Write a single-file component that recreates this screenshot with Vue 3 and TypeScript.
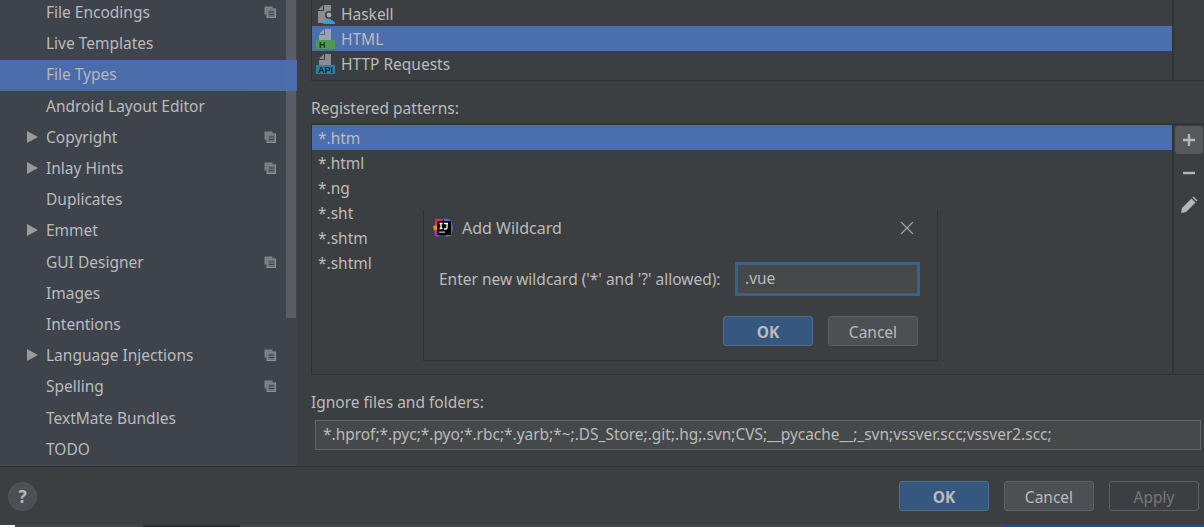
<script setup lang="ts">
interface NavItem { label: string; arrow?: boolean; copy?: boolean; active?: boolean }
const nav: NavItem[] = [
  { label: 'File Encodings', copy: true },
  { label: 'Live Templates' },
  { label: 'File Types', active: true },
  { label: 'Android Layout Editor' },
  { label: 'Copyright', arrow: true, copy: true },
  { label: 'Inlay Hints', arrow: true, copy: true },
  { label: 'Duplicates' },
  { label: 'Emmet', arrow: true },
  { label: 'GUI Designer', copy: true },
  { label: 'Images' },
  { label: 'Intentions' },
  { label: 'Language Injections', arrow: true, copy: true },
  { label: 'Spelling', copy: true },
  { label: 'TextMate Bundles' },
  { label: 'TODO' },
]
const patterns = ['*.htm', '*.html', '*.ng', '*.sht', '*.shtm', '*.shtml']
</script>

<template>
  <div class="window">
    <div class="main">
      <aside class="sidebar">
        <div class="nav">
          <div v-for="item in nav" :key="item.label" class="nav-row" :class="{ active: item.active }">
            <span class="arrow-slot"><i v-if="item.arrow" class="arrow"></i></span>
            <span class="nav-label">{{ item.label }}</span>
            <svg v-if="item.copy" class="copy" width="12" height="12" viewBox="0 0 12 12">
              <path d="M.5.5h8v2h-6v6h-2z" fill="#7f8388" />
              <rect x="3" y="3" width="8.5" height="8.5" fill="#6e7276" stroke="#8d9195" />
              <path d="M5 6h5M5 8.5h5" stroke="#3e434c" />
            </svg>
          </div>
        </div>
        <div class="side-scroll"><div class="side-thumb"></div></div>
      </aside>

      <section class="content">
        <div class="types-box">
          <div class="types-list">
            <div class="type-row">
              <svg class="ficon" width="20" height="25" viewBox="0 0 20 25">
                <path d="M2 9l5-5v5zM8 4h7v18H2V10h6z" fill="#8a8d90" />
                <circle cx="13" cy="14" r="4" fill="#3c3f41" />
                <circle cx="13" cy="14" r="2.400" fill="#a8abad" />
                <path d="M7 23c0-3 2-4 6-4s6 1 6 4z" fill="#29a3dc" />
              </svg>
              <span>Haskell</span>
            </div>
            <div class="type-row selected">
              <svg class="ficon" width="20" height="25" viewBox="0 0 20 25">
                <path d="M3 8l5-5v5zM9 3h6v11H3V9h6z" fill="#9aa3b4" />
                <rect y="14" width="19" height="9" fill="#4e9a52" />
                <text x="3" y="22" class="badge-text" fill="#16361a">H</text>
              </svg>
              <span>HTML</span>
            </div>
            <div class="type-row">
              <svg class="ficon" width="20" height="25" viewBox="0 0 20 25">
                <path d="M3 8l5-5v5zM9 3h6v11H3V9h6z" fill="#8a8d90" />
                <rect y="14" width="19" height="9" fill="#2d7fa8" />
                <text x="2" y="22" class="badge-text" fill="#10222c">API</text>
              </svg>
              <span>HTTP Requests</span>
            </div>
          </div>
          <div class="box-gutter"></div>
        </div>

        <div class="section-label patterns-label">Registered patterns:</div>

        <div class="patterns-box">
          <div class="patterns-list">
            <div v-for="(p, i) in patterns" :key="p" class="pattern-row" :class="{ selected: i === 0 }">{{ p }}</div>
          </div>
          <div class="tools">
            <button class="tool hot">
              <svg width="16" height="16" viewBox="0 0 16 16"><path d="M8 2v12M2 8h12" stroke="#b4b6b8" stroke-width="2.400" /></svg>
            </button>
            <button class="tool">
              <svg width="16" height="16" viewBox="0 0 16 16"><path d="M2 8h12" stroke="#b4b6b8" stroke-width="2.400" /></svg>
            </button>
            <button class="tool">
              <svg width="18" height="18" viewBox="0 0 18 18"><path d="M1 17l1-5L11.500 2.500l4 4L6 16zM12.500 1.500l1-1 4 4-1 1z" fill="#b4b6b8" /></svg>
            </button>
          </div>
        </div>

        <div class="section-label ignore-label">Ignore files and folders:</div>
        <div class="ignore-input">*.hprof;*.pyc;*.pyo;*.rbc;*.yarb;*~;.DS_Store;.git;.hg;.svn;CVS;__pycache__;_svn;vssver.scc;vssver2.scc;</div>

        <div class="dialog">
          <div class="dialog-title">
            <svg class="logo" width="21" height="20" viewBox="0 0 21 20">
              <path d="M2 1h8l-2 8-6 3z" fill="#f0245e" />
              <path d="M11 0l7 2 2 8-2 8-5 1z" fill="#3f6fe8" />
              <path d="M1 12l5-1v8l-4-1z" fill="#a832b8" />
              <path d="M0 8l4-1v5H1z" fill="#f58a1f" />
              <rect x="4" y="3" width="14" height="14" fill="#000" />
              <path d="M6.500 5.500h3M8 5.500v5M6.500 10.500h3M11 5.500h4M14 5.500v4.500q0 1-1.500 1H11" stroke="#fff" fill="none" stroke-width="1.300" />
              <rect x="6" y="13.500" width="6" height="1.300" fill="#bbb" />
            </svg>
            <span class="title-text">Add Wildcard</span>
            <svg class="close" width="14" height="14" viewBox="0 0 14 14"><path d="M1 1l12 12M13 1 1 13" stroke="#a4a6a8" stroke-width="1.100" /></svg>
          </div>
          <div class="dialog-field">
            <label class="field-label">Enter new wildcard ('*' and '?' allowed):</label>
            <div class="field-input">.vue</div>
          </div>
          <div class="dialog-actions">
            <button class="btn primary">OK</button>
            <button class="btn">Cancel</button>
          </div>
        </div>
      </section>
    </div>

    <footer class="footer">
      <div class="help">?</div>
      <div class="footer-actions">
        <button class="btn primary">OK</button>
        <button class="btn">Cancel</button>
        <button class="btn disabled">Apply</button>
      </div>
    </footer>

    <div class="strip">
      <span class="strip-white"></span>
      <span class="strip-dark"></span>
      <span class="strip-blue"></span>
    </div>
  </div>
</template>

<style scoped>
.window {
  width: 1204px;
  height: 527px;
  background: #3c3f41;
  color: #bbbbbb;
  font-family: "Noto Sans", "Open Sans", sans-serif;
  font-size: 15.500px;
  display: flex;
  flex-direction: column;
  overflow: hidden;
}
.main {
  height: 466px;
  display: flex;
  flex: none;
}
.sidebar {
  width: 297px;
  flex: none;
  background: #3e434c;
  position: relative;
  overflow: hidden;
}
.nav {
  margin-top: -2.500px;
}
.nav-row {
  height: 31.200px;
  box-sizing: border-box;
  display: flex;
  align-items: center;
  padding: 0 21px 2px 27px;
}
.nav-row.active {
  background: #4b6eaf;
  position: relative;
  z-index: 1;
  opacity: 0.97;
}
.arrow-slot {
  width: 19px;
  flex: none;
  display: flex;
}
.arrow {
  width: 0;
  height: 0;
  border-left: 11px solid #9a9a9a;
  border-top: 6px solid transparent;
  border-bottom: 6px solid transparent;
}
.nav-label {
  flex: 1;
}
.copy {
  flex: none;
}
.side-scroll {
  position: absolute;
  top: 0;
  right: 1px;
  bottom: 0;
  width: 10px;
}
.side-thumb {
  height: 318px;
  background: rgba(255, 255, 255, 0.14);
}
.content {
  flex: 1;
  padding-left: 14px;
  position: relative;
}
.types-box {
  height: 80px;
  display: flex;
  border-left: 1px solid #2f3133;
  border-bottom: 1px solid #2f3133;
}
.types-list {
  width: 860px;
  padding-top: 1px;
  flex: none;
}
.box-gutter {
  flex: 1;
  border-left: 2px solid #323436;
}
.type-row {
  height: 25px;
  display: flex;
  align-items: center;
  gap: 5px;
  padding-left: 4px;
}
.type-row.selected,
.pattern-row.selected {
  background: #4b6eaf;
}
.ficon {
  flex: none;
}
.badge-text {
  font-family: "Liberation Sans", sans-serif;
  font-size: 9px;
  font-weight: 700;
}
.section-label {
  line-height: 20px;
}
.patterns-label {
  margin-top: 17px;
}
.patterns-box {
  margin-top: 5px;
  height: 249px;
  display: flex;
  border-top: 2px solid #323436;
  border-bottom: 1px solid #2f3133;
  border-left: 1px solid #2f3133;
}
.patterns-list {
  width: 860px;
  flex: none;
}
.pattern-row {
  height: 25px;
  line-height: 27px;
  padding-left: 6px;
}
.tools {
  flex: 1;
  border-left: 2px solid #323436;
  padding: 1px 0 0 1px;
  display: flex;
  flex-direction: column;
  gap: 4.500px;
}
.tool {
  width: 28px;
  height: 28px;
  margin: 0;
  padding: 0;
  border: none;
  background: none;
  border-radius: 4px;
  display: flex;
  align-items: center;
  justify-content: center;
}
.tool.hot {
  background: #55595a;
}
.ignore-label {
  margin-top: 17px;
}
.ignore-input {
  margin: 8px 3px 0 4px;
  height: 30px;
  line-height: 27px;
  padding-left: 7px;
  font-size: 15.440px;
  background: #45494a;
  border: 1px solid #646464;
  box-sizing: border-box;
}
.dialog {
  position: absolute;
  left: 126px;
  top: 210px;
  width: 515px;
  height: 151px;
  box-sizing: border-box;
  background: #3c3f41;
  border: 1px solid #2f3133;
  border-top: none;
  display: flex;
  flex-direction: column;
}
.dialog-title {
  height: 36px;
  display: flex;
  align-items: center;
  padding: 0 23px 0 9px;
}
.logo {
  flex: none;
}
.title-text {
  margin-left: 8px;
  flex: 1;
  font-size: 16px;
}
.dialog-field {
  display: flex;
  align-items: center;
  margin-top: 16px;
  padding-left: 15px;
}
.field-label {
  width: 296px;
  flex: none;
}
.field-input {
  width: 185px;
  height: 34px;
  line-height: 27px;
  box-sizing: border-box;
  border: 3px solid #3d6185;
  padding-left: 7px;
  background: #45494a;
}
.dialog-actions {
  display: flex;
  gap: 15px;
  margin-top: 20px;
  padding-left: 299px;
}
.btn {
  width: 90px;
  height: 30px;
  padding: 1px 0 0;
  margin: 0;
  box-sizing: border-box;
  font: inherit;
  color: #bbbbbb;
  background: #4c5052;
  border: 1px solid #5e6060;
  border-radius: 3px;
}
.btn.primary {
  background: #365880;
  border-color: #4c708c;
  font-weight: 700;
}
.btn.disabled {
  background: transparent;
  border-color: #5e6060;
  color: #777777;
}
.footer {
  flex: 1;
  border-top: 1px solid #2f3133;
  display: flex;
  align-items: flex-start;
  justify-content: space-between;
  padding: 14px 5px 0 8px;
}
.help {
  width: 29px;
  height: 29px;
  box-sizing: border-box;
  border: 1px solid #56595b;
  border-radius: 50%;
  background: #4c5052;
  color: #b6b8b9;
  font-weight: 700;
  font-size: 17px;
  line-height: 27px;
  text-align: center;
  margin-top: 1px;
}
.footer-actions {
  display: flex;
  gap: 15px;
}
.strip {
  height: 2px;
  flex: none;
  display: flex;
  background: #45484a;
}
.strip-white {
  width: 15px;
  background: #ffffff;
}
.strip-dark {
  width: 97px;
  margin-left: 128px;
  background: #2b2d2e;
}
.strip-blue {
  width: 200px;
  margin-left: auto;
  background: #0a4fb0;
}
</style>
